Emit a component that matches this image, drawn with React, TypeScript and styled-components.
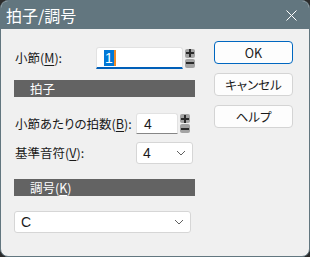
import React from 'react';
import styled, { createGlobalStyle } from 'styled-components';

const Global = createGlobalStyle`
  html, body { margin: 0; padding: 0; background: #2b2b2b; }
  body {
    font-family: "Noto Sans CJK JP", "Noto Sans", sans-serif;
    font-feature-settings: "palt";
  }
`;

const Frame = styled.div`
  width: 310px;
  height: 257px;
  box-sizing: border-box;
  background: #f0f0f0;
  border: 1px solid #62767f;
  border-radius: 8px;
  overflow: hidden;
  display: flex;
  flex-direction: column;
`;

const TitleBar = styled.div`
  height: 28px;
  background: #62767f;
  display: flex;
  align-items: center;
  justify-content: space-between;
  padding: 0 12px 0 5px;
  color: #fff;
  font-size: 16px;
  flex-shrink: 0;
`;

const Body = styled.div`
  flex: 1;
  display: flex;
  padding: 12px 0 0 13px;
`;

const Left = styled.div`
  width: 181px;
  display: flex;
  flex-direction: column;
`;

const Right = styled.div`
  display: flex;
  flex-direction: column;
  gap: 9px;
  margin-left: 19px;
`;

const Row = styled.div<{ $mt?: number }>`
  display: flex;
  align-items: center;
  margin-top: ${p => p.$mt ?? 0}px;
`;

const Label = styled.div<{ $w: number }>`
  width: ${p => p.$w}px;
  font-size: 12.5px;
  color: #1a1a1a;
  padding-left: 1px;
  line-height: 16px;
`;

const U = styled.span`
  text-decoration: underline;
  text-underline-offset: 2px;
`;

const TextBox = styled.div<{ $w: number; $h: number; $focus?: boolean }>`
  width: ${p => p.$w}px;
  height: ${p => p.$h}px;
  box-sizing: border-box;
  background: #fff;
  border: 1px solid #e2e2e2;
  border-bottom: ${p => (p.$focus ? '2px solid #005fb8' : '1px solid #868686')};
  border-radius: 3px 3px 0 0;
  display: flex;
  align-items: center;
  padding-left: 7px;
  font-family: "Liberation Sans", sans-serif;
  font-size: 14px;
  color: #1a1a1a;
`;

const Selected = styled.span`
  background: #0078d7;
  color: #fff;
  padding: 0 1px;
  line-height: 16px;
  border-right: 2px solid #f08a24;
`;

const Spin = styled.div`
  display: flex;
  flex-direction: column;
  gap: 1px;
  margin-left: 2px;
`;

const SpinBtn = styled.div`
  width: 10px;
  height: 9px;
  background: #a3a3a3;
  border-radius: 2px;
  display: flex;
  align-items: center;
  justify-content: center;
`;

const Section = styled.div<{ $mt: number }>`
  margin-top: ${p => p.$mt}px;
  height: 17px;
  background: #636363;
  color: #fff;
  font-size: 12.5px;
  line-height: 17px;
  padding-left: 16px;
`;

const Select = styled.div<{ $w: number }>`
  width: ${p => p.$w}px;
  height: 22px;
  box-sizing: border-box;
  background: #fff;
  border: 1px solid #d6d6d6;
  border-radius: 3px;
  display: flex;
  align-items: center;
  justify-content: space-between;
  padding: 0 6px 0 6px;
  font-family: "Liberation Sans", sans-serif;
  font-size: 14px;
  color: #1a1a1a;
`;

const Button = styled.div<{ $primary?: boolean }>`
  width: 79px;
  height: 23px;
  box-sizing: border-box;
  background: #fdfdfd;
  border: 1px solid ${p => (p.$primary ? '#0067c0' : '#d4d4d4')};
  border-radius: 4px;
  display: flex;
  align-items: center;
  justify-content: center;
  font-size: 12.5px;
  color: #1a1a1a;
`;

const Plus = () => (
  <svg width="8" height="8" viewBox="0 0 8 8">
    <path d="M0 4h8M4 0v8" stroke="#2a2a2a" strokeWidth="2" />
  </svg>
);

const Minus = () => (
  <svg width="8" height="8" viewBox="0 0 8 8">
    <path d="M0 4h8" stroke="#2a2a2a" strokeWidth="2" />
  </svg>
);

const Chevron = () => (
  <svg width="10" height="6" viewBox="0 0 10 6">
    <path d="M1 1l4 4 4-4" stroke="#606060" strokeWidth="1" fill="none" />
  </svg>
);

const Close = () => (
  <svg width="11" height="11" viewBox="0 0 11 11">
    <path d="M0.5 0.5l10 10M10.5 0.5l-10 10" stroke="#fff" strokeWidth="1" />
  </svg>
);

const Spinner = () => (
  <Spin>
    <SpinBtn><Plus /></SpinBtn>
    <SpinBtn><Minus /></SpinBtn>
  </Spin>
);

export default function App() {
  return (
    <>
      <Global />
      <Frame>
        <TitleBar>
          <span>拍子/調号</span>
          <Close />
        </TitleBar>
        <Body>
          <Left>
            <Row $mt={6}>
              <Label $w={81}>小節(<U>M</U>):</Label>
              <TextBox $w={87} $h={22} $focus>
                <Selected>1</Selected>
              </TextBox>
              <Spinner />
            </Row>
            <Section $mt={11}>拍子</Section>
            <Row $mt={16}>
              <Label $w={121}>小節あたりの拍数(<U>B</U>):</Label>
              <TextBox $w={42} $h={21}>4</TextBox>
              <Spinner />
            </Row>
            <Row $mt={8}>
              <Label $w={121}>基準音符(<U>V</U>):</Label>
              <Select $w={57}>
                <span>4</span>
                <Chevron />
              </Select>
            </Row>
            <Section $mt={15}>調号(<U>K</U>)</Section>
            <Row $mt={15}>
              <Select $w={177}>
                <span>C</span>
                <Chevron />
              </Select>
            </Row>
          </Left>
          <Right>
            <Button $primary>OK</Button>
            <Button>キャンセル</Button>
            <Button>ヘルプ</Button>
          </Right>
        </Body>
      </Frame>
    </>
  );
}
